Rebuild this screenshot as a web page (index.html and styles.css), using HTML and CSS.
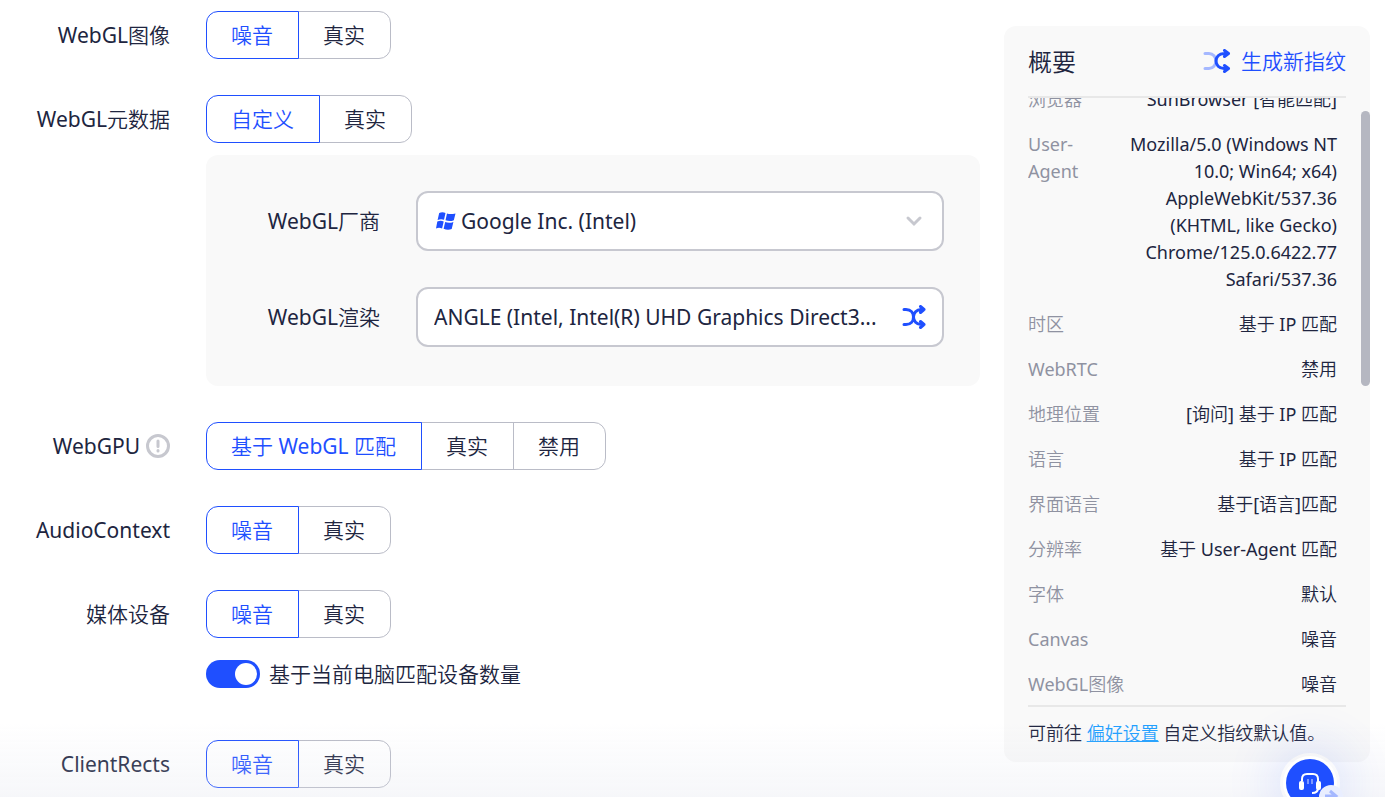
FILE: index.html
```html
<!DOCTYPE html>
<html lang="zh-CN">
<head>
<meta charset="utf-8">
<title>指纹配置</title>
<link rel="stylesheet" href="styles.css">
</head>
<body>
<svg class="sprite" aria-hidden="true">
  <symbol id="shuffle" viewBox="0 0 24 24"><path d="M2 4.500h2c5 0 7.500 3.500 7.500 7.500s-2.500 7.500-7.500 7.500H2M22 4.500h-3c-4.500 0-7.500 3.500-7.500 7.500s3 7.500 7.500 7.500h3M18.500 1.500l3.500 3-3.500 3M18.500 16.500l3.500 3-3.500 3"/></symbol>
</svg>
<div class="page">
  <main class="form">
    <div class="row" role="group" aria-labelledby="l-image">
      <span class="label" id="l-image">WebGL图像</span>
      <div class="segments">
        <label class="segment"><input type="radio" name="image" checked>噪音</label>
        <label class="segment"><input type="radio" name="image">真实</label>
      </div>
    </div>
    <div class="row" role="group" aria-labelledby="l-meta">
      <span class="label" id="l-meta">WebGL元数据</span>
      <div class="content">
        <div class="segments">
          <label class="segment"><input type="radio" name="meta" checked>自定义</label>
          <label class="segment"><input type="radio" name="meta">真实</label>
        </div>
        <div class="panel">
          <label for="vendor">WebGL厂商</label>
          <div class="field">
            <svg class="windows" viewBox="0 0 20 18"><path d="M3.200 1C5.500-.2 7.300-.1 9.500.9L8 7.800C5.800 6.800 3.900 7 1.600 8zM11 1.400c2.300 1 5 .9 8.500 0L17.800 8.200c-2.600 1.200-5.400 1.100-8.300.1zM1.300 9.500c2.300-1 4.100-1.100 6.400-.1L6.100 16.500C3.900 15.400 2.200 15.500 0 16.400zM9.200 10c2.500 1 5.200 1.100 8.200-.1l-1.700 7c-2.500 1.200-5.300 1-8.100-.1z"/></svg>
            <select id="vendor"><option>Google Inc. (Intel)</option></select>
            <svg class="chevron" viewBox="0 0 24 24"><path d="M6 9l6 6 6-6"/></svg>
          </div>
          <label for="renderer">WebGL渲染</label>
          <div class="field">
            <input id="renderer" type="text" value="ANGLE (Intel, Intel(R) UHD Graphics Direct3...">
            <button class="icon-button" type="button" aria-label="随机渲染"><svg class="shuffle"><use href="#shuffle"/></svg></button>
          </div>
        </div>
      </div>
    </div>
    <div class="row" role="group" aria-labelledby="l-gpu">
      <span class="label" id="l-gpu">WebGPU <svg class="info" viewBox="0 0 24 24"><circle cx="12" cy="12" r="10.500"/><path d="M12 7v5.500M12 16.500v.5"/></svg></span>
      <div class="segments">
        <label class="segment"><input type="radio" name="gpu" checked>基于 WebGL 匹配</label>
        <label class="segment"><input type="radio" name="gpu">真实</label>
        <label class="segment"><input type="radio" name="gpu">禁用</label>
      </div>
    </div>
    <div class="row" role="group" aria-labelledby="l-audio">
      <span class="label" id="l-audio">AudioContext</span>
      <div class="segments">
        <label class="segment"><input type="radio" name="audio" checked>噪音</label>
        <label class="segment"><input type="radio" name="audio">真实</label>
      </div>
    </div>
    <div class="row" role="group" aria-labelledby="l-media">
      <span class="label" id="l-media">媒体设备</span>
      <div class="content">
        <div class="segments">
          <label class="segment"><input type="radio" name="media" checked>噪音</label>
          <label class="segment"><input type="radio" name="media">真实</label>
        </div>
        <label class="toggle"><input type="checkbox" role="switch" checked>基于当前电脑匹配设备数量</label>
      </div>
    </div>
    <div class="row" role="group" aria-labelledby="l-rects">
      <span class="label" id="l-rects">ClientRects</span>
      <div class="segments">
        <label class="segment"><input type="radio" name="rects" checked>噪音</label>
        <label class="segment"><input type="radio" name="rects">真实</label>
      </div>
    </div>
  </main>
  <aside class="summary">
    <header class="summary-head">
      <h2>概要</h2>
      <button class="generate" type="button">
        <svg viewBox="0 0 28 24"><path class="pale" d="M2 4.500h4c4 0 7 3.500 7 7.500s-3 7.500-7 7.500H2"/><path d="M25 4.500h-4c-5 0-8 3.500-8 7.500s3 7.500 8 7.500h4M21.500 1.500l4 3-4 3M21.500 16.500l4 3-4 3"/></svg>
        生成新指纹
      </button>
    </header>
    <div class="scroll">
      <dl class="facts">
        <dt>浏览器</dt><dd>SunBrowser [智能匹配]</dd>
        <dt class="wrap">User-Agent</dt><dd>Mozilla/5.0 (Windows NT 10.0; Win64; x64) AppleWebKit/537.36 (KHTML, like Gecko) Chrome/125.0.6422.77 Safari/537.36</dd>
        <dt>时区</dt><dd>基于 IP 匹配</dd>
        <dt>WebRTC</dt><dd>禁用</dd>
        <dt>地理位置</dt><dd>[询问] 基于 IP 匹配</dd>
        <dt>语言</dt><dd>基于 IP 匹配</dd>
        <dt>界面语言</dt><dd>基于[语言]匹配</dd>
        <dt>分辨率</dt><dd>基于 User-Agent 匹配</dd>
        <dt>字体</dt><dd>默认</dd>
        <dt>Canvas</dt><dd>噪音</dd>
        <dt>WebGL图像</dt><dd>噪音</dd>
      </dl>
    </div>
    <p class="note">可前往 <a href="#">偏好设置</a> 自定义指纹默认值。</p>
    <span class="thumb"></span>
  </aside>
</div>
<div class="haze"></div>
<button class="support" type="button" aria-label="客服">
  <svg viewBox="0 0 60 60">
    <circle cx="30" cy="30" r="27" fill="#fff"/><circle cx="30" cy="30" r="24" fill="#1f4fff"/>
    <path d="M22 28v-2q0-5 5-5h6q5 0 5 5v9q0 5-6 5" fill="none" stroke="#fff" stroke-width="2"/>
    <rect x="19" y="28" width="5" height="9" rx="2" fill="#fff"/><rect x="36" y="28" width="5" height="9" rx="2" fill="#fff"/>
    <path d="M28 26v5M32 26v5" stroke="#7d98ff" stroke-width="2"/>
    <circle cx="51" cy="44" r="12" fill="#e9eeff"/><path d="M45 43h11M50 38l6 5-6 5" fill="none" stroke="#a5b8ff" stroke-width="3"/>
  </svg>
</button>
</body>
</html>
```
FILE: styles.css
```css
* { box-sizing: border-box; }
body {
  margin: 0;
  height: 100vh;
  overflow: hidden;
  background: #fff;
  color: #202540;
  font: 400 21px/30px "Noto Sans", "Noto Sans CJK SC DemiLight", "Noto Sans CJK SC Light", "Noto Sans CJK SC", sans-serif;
}
button, input, select { font: inherit; color: inherit; }
button { padding: 0; border: 0; background: none; cursor: pointer; }
.sprite { position: absolute; width: 0; height: 0; }
.page { display: flex; gap: 24px; height: 100%; padding-right: 15px; }
.form { flex: 1; min-width: 0; display: flex; flex-direction: column; gap: 36px; padding-top: 11px; }
.row {
  display: grid;
  grid-template-columns: 170px minmax(0, 1fr);
  column-gap: 36px;
  align-items: start;
}
.label { display: flex; justify-content: flex-end; align-items: center; gap: 6px; height: 48px; }
.info { width: 24px; height: 24px; fill: none; stroke: #c7c8cf; stroke-width: 3; stroke-linecap: round; }
.segments { display: flex; }
.segment {
  position: relative;
  height: 48px;
  padding: 0 25px 0 24px;
  border: 1px solid #babcc7;
  line-height: 46px;
  white-space: nowrap;
}
.segment + .segment { margin-left: -1px; }
.segment:first-child { border-radius: 12px 0 0 12px; }
.segment:last-child { border-radius: 0 12px 12px 0; }
.segment:has(:checked) { z-index: 1; border-color: #1f4fff; color: #1f4fff; }
.segment input { position: absolute; opacity: 0; margin: 0; }
.panel {
  display: grid;
  grid-template-columns: 174px minmax(0, 1fr);
  gap: 36px;
  align-items: center;
  margin-top: 12px;
  padding: 36px 36px 39px 0;
  border-radius: 12px;
  background: #f9f9f9;
}
.panel label { text-align: right; }
.field {
  display: flex;
  align-items: center;
  gap: 5px;
  height: 60px;
  padding: 0 16px;
  border: 2px solid #c7c8d0;
  border-radius: 12px;
  background: #fff;
}
.field select, .field input { flex: 1; min-width: 0; padding: 0; border: 0; background: none; appearance: none; outline: 0; text-overflow: ellipsis; }
.windows { width: 20px; height: 18px; margin-left: 2px; fill: #1f4fff; }
.chevron { width: 24px; height: 24px; fill: none; stroke: #c7c8cf; stroke-width: 3; stroke-linecap: round; }
.icon-button { display: flex; }
.shuffle { width: 24px; height: 24px; fill: none; stroke: #1f4fff; stroke-width: 3; stroke-linecap: round; stroke-linejoin: round; }
.toggle { display: flex; align-items: center; gap: 9px; margin: 21px 0 15px; }
.toggle input {
  display: flex;
  justify-content: flex-end;
  width: 54px;
  height: 28px;
  margin: 0;
  padding: 3px;
  border-radius: 14px;
  background: #1f4fff;
  appearance: none;
}
.toggle input::before { content: ""; width: 22px; height: 22px; border-radius: 50%; background: #fff; }
.summary {
  position: relative;
  display: flex;
  flex-direction: column;
  flex: 0 0 366px;
  margin: 26px 0 35px;
  padding: 0 24px;
  border-radius: 12px;
  background: #f9f9f9;
  font-size: 18px;
  line-height: 27px;
}
.summary-head { display: flex; justify-content: space-between; align-items: center; height: 72px; border-bottom: 2px solid #e8e8e8; }
.summary h2 { margin: 0; font-size: 24px; font-weight: 400; }
.generate { display: flex; align-items: center; gap: 10px; color: #1f4fff; font-size: 21px; }
.generate svg { width: 28px; height: 24px; fill: none; stroke: #1f4fff; stroke-width: 3; stroke-linecap: round; stroke-linejoin: round; }
.generate .pale { stroke: #a5b8ff; }
.scroll { flex: 1; min-height: 0; overflow: hidden; border-bottom: 2px solid #e8e8e8; }
.facts { display: grid; grid-template-columns: 72px minmax(0, 1fr); gap: 18px 12px; margin: -12px 9px 0 0; }
.facts dt { color: #8f92a1; white-space: nowrap; }
.facts .wrap { white-space: normal; }
.facts dd { margin: 0; text-align: right; }
.note { margin: 13px 0 15px; white-space: nowrap; }
.note a { color: #1f9fff; }
.thumb { position: absolute; top: 85px; right: 0; width: 9px; height: 275px; border-radius: 5px; background: #b5b7c1; }
.haze { position: fixed; z-index: 2; inset: auto 0 0; height: 75px; background: linear-gradient(#dcdfea00, #dcdfea40); pointer-events: none; }
.support { position: fixed; z-index: 3; right: 45px; bottom: -16px; width: 60px; height: 60px; border-radius: 50%; box-shadow: 0 0 50px 8px #1f4fff20; }
.support svg { display: block; width: 60px; height: 60px; overflow: visible; }
```
